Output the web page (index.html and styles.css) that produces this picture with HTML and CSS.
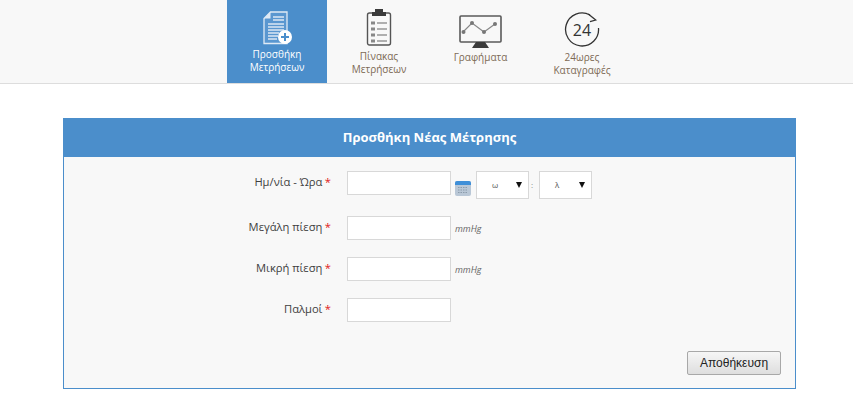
FILE: index.html
```html
<!DOCTYPE html>
<html lang="el">
<head>
<meta charset="utf-8">
<title>Προσθήκη Μέτρησης</title>
<link rel="stylesheet" href="styles.css">
</head>
<body>
<nav class="topbar">
  <a class="tab tab-active">
    <svg class="icon-add" width="29" height="34" viewBox="0 0 29 34">
      <path d="M7.500 1H24V32.500H1V7.500Z" fill="#5a97d0" stroke="#dfeaf5" stroke-width="1.300"/>
      <path d="M7.500 1V7.500H1Z" fill="#dfeaf5"/>
      <path d="M10 6H21M10 9H21M5 13H21M5 16H21M5 19H21M5 22H16M5 25H15M5 28H14" stroke="#dbe8f4" stroke-width="1.500"/>
      <circle cx="22" cy="26" r="7" fill="#fff"/>
      <path d="M22 22V30M18 26H26" stroke="#4b8ecb" stroke-width="2"/>
    </svg>
    <span class="label-add">Προσθήκη<br>Μετρήσεων</span>
  </a>
  <a class="tab">
    <svg class="icon-list" width="26" height="38" viewBox="0 0 26 38">
      <rect x="1.500" y="5" width="23" height="32" rx="2" fill="#f8f8f8" stroke="#555" stroke-width="1.400"/>
      <path d="M9 1H17V4H20V8H6V4H9Z" fill="#3b3b3b"/>
      <path d="M11 15H21M11 21H21M11 27H21M11 33H21" stroke="#666" stroke-width="1.200"/>
      <path d="M5 13.500H9V16.500H5ZM5 19.500H9V22.500H5ZM5 25.500H9V28.500H5ZM5 31.500H9V34.500H5Z" fill="#888"/>
    </svg>
    <span class="label-list">Πίνακας<br>Μετρήσεων</span>
  </a>
  <a class="tab">
    <svg class="icon-chart" width="43" height="33" viewBox="0 0 43 33">
      <rect x="1" y="1" width="41" height="26" rx="1" fill="#f8f8f8" stroke="#5a5a5a" stroke-width="1.600"/>
      <path d="M4 17L13 8L25 17L36 9" fill="none" stroke="#888" stroke-width="1.200"/>
      <circle cx="4.500" cy="17" r="2" fill="#777"/><circle cx="13" cy="8" r="2" fill="#777"/>
      <circle cx="25" cy="17" r="2" fill="#777"/><circle cx="36" cy="9" r="2" fill="#777"/>
      <path d="M17 27H26L30 33H13Z" fill="#3b3b3b"/>
    </svg>
    <span class="label-chart">Γραφήματα</span>
  </a>
  <a class="tab">
    <svg class="icon-clock" width="36" height="35" viewBox="0 0 36 35">
      <path d="M26 3A16.500 16.500 0 1 0 34.500 16" fill="none" stroke="#333" stroke-width="1.300"/>
      <path d="M24.300 2L31.700 8L26 9.700" fill="none" stroke="#333" stroke-width="1.300"/>
      <text x="18" y="23.500" class="clock-text">24</text>
    </svg>
    <span class="label-clock">24ωρες<br>Καταγραφές</span>
  </a>
</nav>

<main class="content">
  <section class="panel">
    <h1 class="panel-title">Προσθήκη Νέας Μέτρησης</h1>
    <form class="panel-body">
      <div class="row row-first">
        <label class="label">Ημ/νία - Ώρα <b>*</b></label>
        <input class="field" type="text">
        <svg class="cal" width="16" height="16" viewBox="0 0 16 16">
          <rect x="0" y="1" width="16" height="15" rx="2" fill="#b9c7d6"/>
          <path d="M0 3a2 2 0 0 1 2-2H14a2 2 0 0 1 2 2V5H0Z" fill="#3f8fd8"/>
          <path d="M3 7.500H13M3 10H13M3 12.500H13" stroke="#8b9bab" stroke-width="1" stroke-dasharray="1.500 1"/>
        </svg>
        <span class="select"><span class="select-text">ω</span><i class="caret"></i></span>
        <span class="colon">:</span>
        <span class="select"><span class="select-text">λ</span><i class="caret"></i></span>
      </div>
      <div class="row">
        <label class="label">Μεγάλη πίεση <b>*</b></label>
        <input class="field" type="text">
        <em class="unit">mmHg</em>
      </div>
      <div class="row">
        <label class="label">Μικρή πίεση <b>*</b></label>
        <input class="field" type="text">
        <em class="unit">mmHg</em>
      </div>
      <div class="row">
        <label class="label">Παλμοί <b>*</b></label>
        <input class="field" type="text">
      </div>
      <div class="actions">
        <button class="save" type="button">Αποθήκευση</button>
      </div>
    </form>
  </section>
</main>
</body>
</html>
```

FILE: styles.css
```css
* { box-sizing: border-box; }
html, body { margin: 0; padding: 0; background: #fff; }
body { font-family: "Open Sans", sans-serif; color: #333; overflow: hidden; }

.topbar {
  display: flex;
  height: 84px;
  padding-left: 227px;
  background: #f8f8f8;
  border-bottom: 1px solid #ddd;
}
.tab {
  width: 100px;
  height: 83px;
  margin-right: 1.500px;
  display: flex;
  flex-direction: column;
  align-items: center;
  font-size: 10px;
  line-height: 13px;
  text-align: center;
  color: #7d6a55;
}
.tab svg { display: block; flex: none; }
.tab-active { background: #4b8ecb; color: #fff; margin-right: 2px; }

.icon-add { margin-top: 11px; }
.label-add { margin-top: 3px; }
.icon-list { margin-top: 8px; }
.label-list { margin-top: 4px; }
.icon-chart { margin-top: 15px; }
.label-chart { margin-top: 3px; }
.icon-clock { margin-top: 12px; }
.label-clock { margin-top: 4px; }

.clock-text { font: 16px "Open Sans", sans-serif; fill: #333; text-anchor: middle; }

.content { padding: 34px 57px 0 63px; }
.panel {
  width: 733px;
  height: 271px;
  border: 1px solid #4b8ecb;
  background: #f8f8f8;
}
.panel-title {
  margin: -1px -1px 0;
  height: 39px;
  background: #4b8ecb;
  color: #fff;
  font-size: 13px;
  font-weight: 700;
  line-height: 39px;
  text-align: center;
}
.panel-body { padding: 14px 14px 0 0; }
.row {
  display: flex;
  align-items: center;
  height: 24px;
  margin-bottom: 17px;
}
.row-first { margin-bottom: 21px; }
.label {
  width: 267px;
  padding-bottom: 4px;
  text-align: right;
  font-size: 11.200px;
  color: #3f3f3f;
}
.label b { margin-left: -0.500px; color: #e02020; font-weight: 400; }
.field {
  width: 104px;
  height: 24px;
  margin-left: 16px;
  border: 1px solid #d8d8d8;
  background: #fff;
}
.cal { margin-left: 4px; margin-top: 9px; }
.select {
  position: relative;
  width: 53px;
  height: 28px;
  margin-left: 5px;
  margin-top: 4px;
  border: 1px solid #d8d8d8;
  background: #fff;
  font-size: 8px;
  line-height: 26px;
}
.select-text { position: absolute; left: 15px; top: 0; color: #555; }
.caret {
  position: absolute;
  right: 6px;
  top: 10px;
  border-left: 3px solid transparent;
  border-right: 3px solid transparent;
  border-top: 6px solid #111;
}
.colon {
  width: 10px;
  padding-right: 4px;
  margin-top: 2px;
  font-size: 8px;
  text-align: center;
  color: #888;
}
.colon + .select { margin-left: 0; }
.unit { margin-left: 4px; margin-top: 1px; font-size: 9px; color: #666; }
.actions {
  display: flex;
  justify-content: flex-end;
  margin-top: 29px;
}
.save {
  width: 94px;
  height: 24px;
  padding: 0;
  border: 1px solid #a8a8a8;
  border-radius: 2px;
  background: linear-gradient(#f6f6f6, #dedede);
  color: #222;
  font-family: "Liberation Sans", sans-serif;
  font-size: 12px;
}
```
